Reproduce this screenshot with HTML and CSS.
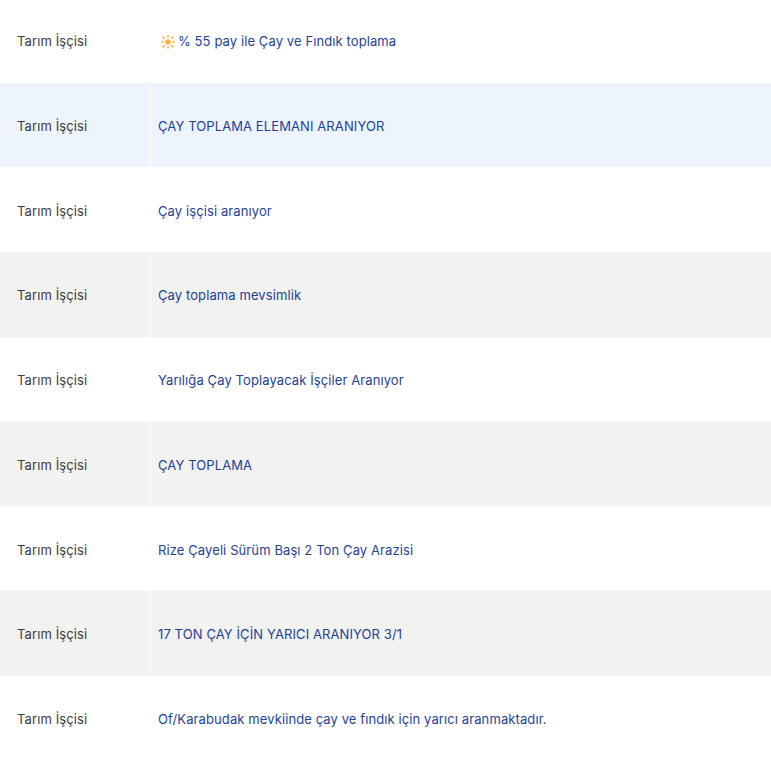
FILE: index.html
```html
<!DOCTYPE html>
<html lang="tr">
<head>
<meta charset="utf-8">
<title>Tarım İşçisi</title>
<link rel="stylesheet" href="styles.css">
</head>
<body>
<div class="list">
  <div class="row first"><div class="cat">Tarım İşçisi</div><div class="title"><a href="#"><svg class="sun" viewBox="0 0 14 14" aria-hidden="true"><circle cx="7" cy="7" r="2.8"/><path d="M7 .3v2.5M7 11.2v2.5M.3 7h2.5M11.2 7h2.5M1.6 1.6l2 2M10.4 10.4l2 2M1.6 12.4l2-2M10.4 3.6l2-2"/></svg>% 55 pay ile Çay ve Fındık toplama</a></div></div>
  <div class="row blue"><div class="cat">Tarım İşçisi</div><div class="title"><a href="#">ÇAY TOPLAMA ELEMANI ARANIYOR</a></div></div>
  <div class="row"><div class="cat">Tarım İşçisi</div><div class="title"><a href="#">Çay işçisi aranıyor</a></div></div>
  <div class="row gray"><div class="cat">Tarım İşçisi</div><div class="title"><a href="#">Çay toplama mevsimlik</a></div></div>
  <div class="row"><div class="cat">Tarım İşçisi</div><div class="title"><a href="#">Yarılığa Çay Toplayacak İşçiler Aranıyor</a></div></div>
  <div class="row gray"><div class="cat">Tarım İşçisi</div><div class="title"><a href="#">ÇAY TOPLAMA</a></div></div>
  <div class="row"><div class="cat">Tarım İşçisi</div><div class="title"><a href="#">Rize Çayeli Sürüm Başı 2 Ton Çay Arazisi</a></div></div>
  <div class="row gray"><div class="cat">Tarım İşçisi</div><div class="title"><a href="#">17 TON ÇAY İÇİN YARICI ARANIYOR 3/1</a></div></div>
  <div class="row"><div class="cat">Tarım İşçisi</div><div class="title"><a href="#">Of/Karabudak mevkiinde çay ve fındık için yarıcı aranmaktadır.</a></div></div>
</div>
</body>
</html>
```
FILE: styles.css
```css
html, body { margin: 0; padding: 0; height: 100%; overflow: hidden; background: #fff; }
body { font-family: Inter, "Liberation Sans", sans-serif; font-size: 13px; letter-spacing: 0.1px; }
.list { display: flex; flex-direction: column; }
.row { display: flex; height: 84.72px; flex: none; }
.row.first { height: 82.6px; }
.row.blue { background: #edf4fe; }
.row.gray { background: #f2f2f0; }
.cat { width: 151px; flex: none; box-sizing: border-box; padding: 2px 0 0 17px; display: flex; align-items: center; color: #3c3c3c; border-right: 1px solid #fff; }
.title { flex: 1; padding: 2px 0 0 7px; display: flex; align-items: center; }
.first .cat, .first .title { padding-top: 0; }
.title a { color: #1f3f98; text-decoration: none; display: flex; align-items: center; }
.first .title a { padding-left: 3px; }
.sun { width: 14px; height: 14px; margin-right: 3px; margin-top: 2px; flex: none; }
.sun circle { fill: #fdb044; }
.sun path { stroke: #fdb044; stroke-width: 1.6; fill: none; }
```
